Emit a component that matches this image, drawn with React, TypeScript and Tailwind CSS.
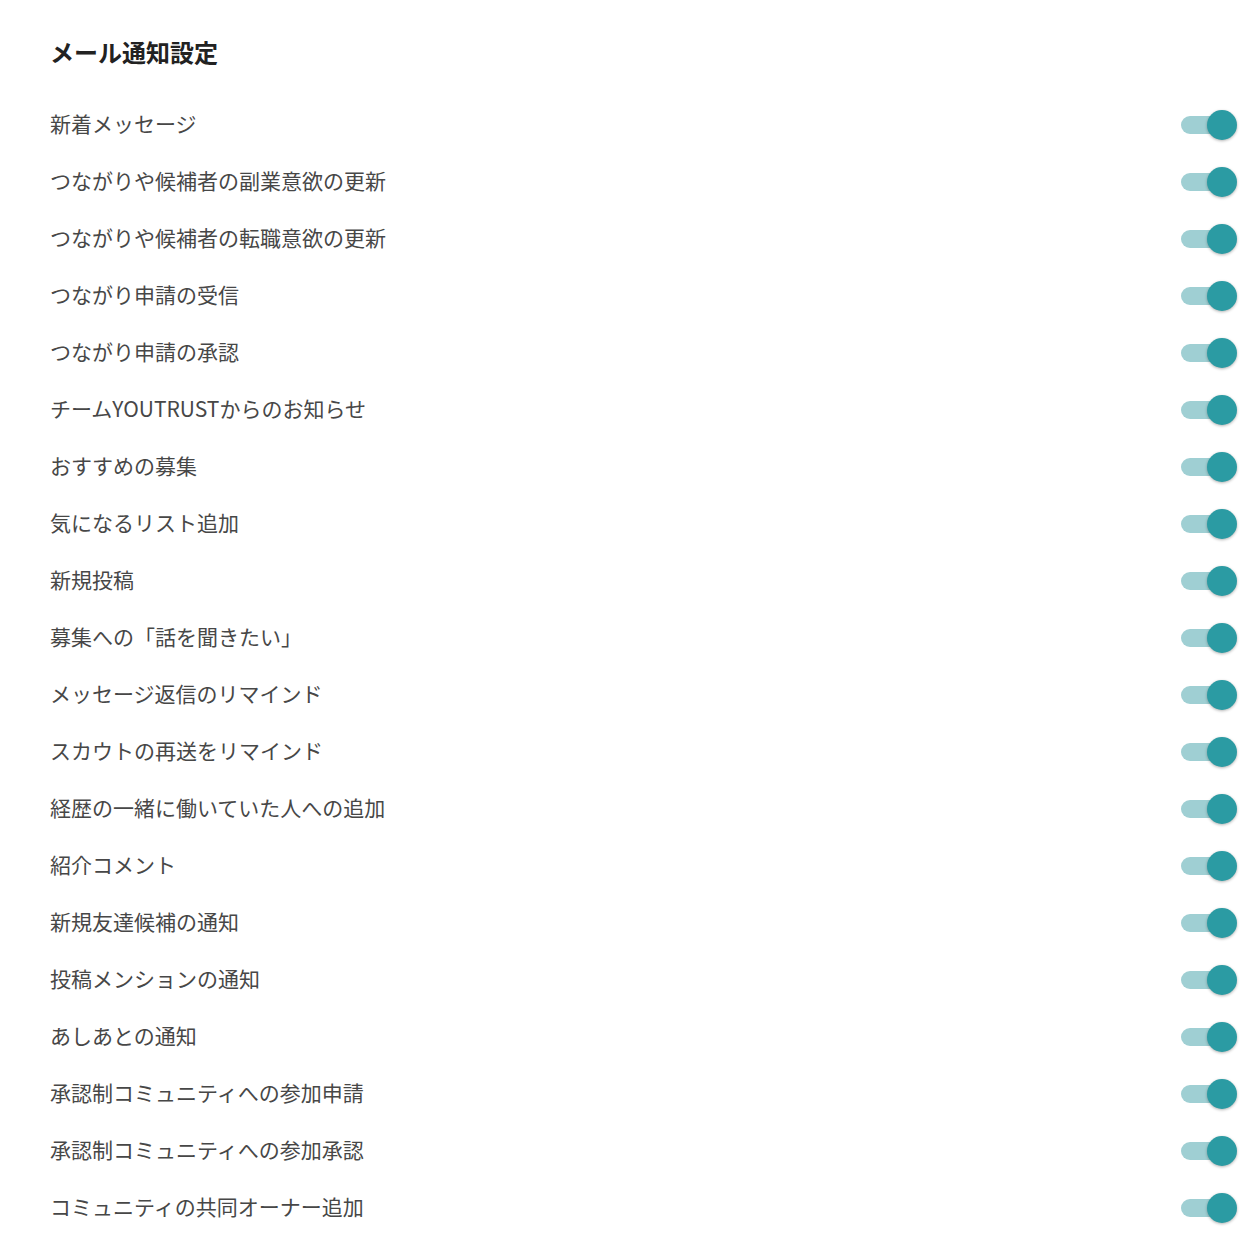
import { useState } from "react";

const ITEMS = [
  "新着メッセージ",
  "つながりや候補者の副業意欲の更新",
  "つながりや候補者の転職意欲の更新",
  "つながり申請の受信",
  "つながり申請の承認",
  "チームYOUTRUSTからのお知らせ",
  "おすすめの募集",
  "気になるリスト追加",
  "新規投稿",
  "募集への「話を聞きたい」",
  "メッセージ返信のリマインド",
  "スカウトの再送をリマインド",
  "経歴の一緒に働いていた人への追加",
  "紹介コメント",
  "新規友達候補の通知",
  "投稿メンションの通知",
  "あしあとの通知",
  "承認制コミュニティへの参加申請",
  "承認制コミュニティへの参加承認",
  "コミュニティの共同オーナー追加",
];

function Toggle({ on, onChange }: { on: boolean; onChange: () => void }) {
  return (
    <button
      type="button"
      onClick={onChange}
      className="relative flex h-[30px] w-[56px] items-center"
      aria-pressed={on}
    >
      <span
        className={`absolute left-0 h-[18px] w-[52px] rounded-full ${
          on ? "bg-[#9fcfd3]" : "bg-[#c7c7c7]"
        }`}
      />
      <span
        className={`absolute top-0 h-[30px] w-[30px] rounded-full shadow-[0_1px_3px_rgba(0,0,0,0.3)] transition-all ${
          on ? "left-[26px] bg-[#2b9ba3]" : "left-0 bg-[#f5f5f5]"
        }`}
      />
    </button>
  );
}

export default function App() {
  const [values, setValues] = useState<boolean[]>(ITEMS.map(() => true));

  return (
    <div
      className="bg-white pl-[50px] pr-[23px] pt-[34px] pb-[8px]"
      style={{ fontFamily: '"Noto Sans CJK JP", "Noto Sans", sans-serif' }}
    >
      <h2 className="text-[24px] font-bold leading-[36px] text-[#222]">
        メール通知設定
      </h2>
      <div className="mt-[26px]">
        {ITEMS.map((label, i) => (
          <div key={label} className="flex h-[57px] items-center justify-between">
            <span className="relative -top-px text-[21px] leading-none text-[#474747]">
              {label}
            </span>
            <Toggle
              on={values[i]}
              onChange={() =>
                setValues((v) => v.map((x, j) => (j === i ? !x : x)))
              }
            />
          </div>
        ))}
      </div>
    </div>
  );
}
